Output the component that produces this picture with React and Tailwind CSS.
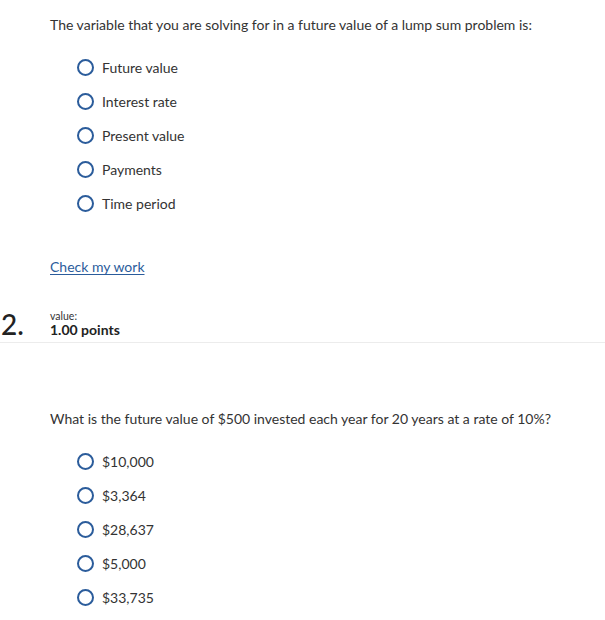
import React from 'react';

const font = { fontFamily: 'Lato, "Liberation Sans", sans-serif' };

function Radio({ label }) {
  return (
    <label className="flex items-center h-[34px] gap-[8px] cursor-pointer">
      <span className="w-[17px] h-[17px] rounded-full border-[2.5px] border-[#2b5c9b] bg-white shrink-0" />
      <span className="text-[14px] text-[#333]">{label}</span>
    </label>
  );
}

function Options({ items }) {
  return (
    <div className="pl-[77px] flex flex-col">
      {items.map(i => (
        <Radio key={i} label={i} />
      ))}
    </div>
  );
}

export default function App() {
  return (
    <div className="w-[605px] h-[620px] bg-white overflow-hidden text-[#333]" style={font}>
      {/* Question 1 */}
      <p className="pl-[50px] pt-[16px] text-[14px] leading-[18px]">
        The variable that you are solving for in a future value of a lump sum problem is:
      </p>
      <div className="mt-[16px]">
        <Options items={['Future value', 'Interest rate', 'Present value', 'Payments', 'Time period']} />
      </div>
      <div className="pl-[50px] mt-[34px]">
        <a href="#" className="text-[14px] text-[#2b5c9b] underline underline-offset-2">Check my work</a>
      </div>

      {/* Question 2 header */}
      <div className="flex items-end mt-[32px] pb-[4px] border-b border-[#ececec]">
        <span className="w-[50px] text-[28px] leading-[28px] font-medium text-[#222] pl-[1px]">2.</span>
        <div className="flex flex-col">
          <span className="text-[10.5px] leading-[12px] text-[#333]">value:</span>
          <span className="text-[14px] leading-[16px] font-bold text-[#222]">1.00 points</span>
        </div>
      </div>

      <p className="pl-[50px] mt-[67px] text-[14px] leading-[18px]">
        What is the future value of $500 invested each year for 20 years at a rate of 10%?
      </p>
      <div className="mt-[16px]">
        <Options items={['$10,000', '$3,364', '$28,637', '$5,000', '$33,735']} />
      </div>
    </div>
  );
}
